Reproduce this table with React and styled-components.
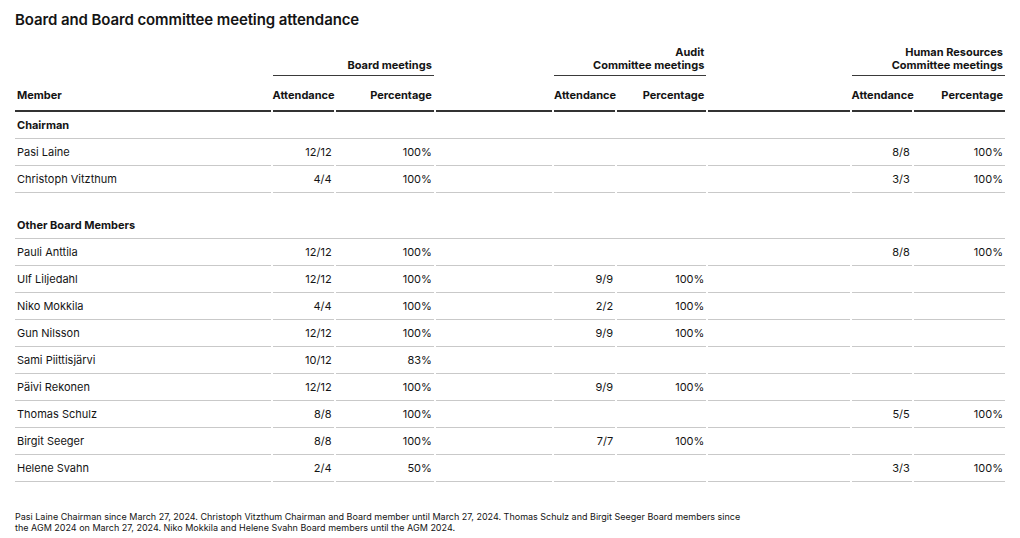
import React from "react";
import styled, { createGlobalStyle } from "styled-components";

const GlobalStyle = createGlobalStyle`
  html, body, #root {
    margin: 0;
    padding: 0;
    background: #ffffff;
  }
  body {
    font-family: Inter, "Liberation Sans", sans-serif;
    color: #141414;
  }
`;

const Page = styled.div`
  width: 1020px;
  padding: 11px 15px 0 15px;
  box-sizing: border-box;
`;

const Title = styled.h1`
  margin: 0;
  font-size: 15px;
  line-height: 18px;
  font-weight: 600;
  letter-spacing: -0.1px;
`;

const Table = styled.table`
  border-collapse: separate;
  border-spacing: 2px 0;
  margin: 17px -2px 0 -2px;
  table-layout: fixed;
  width: calc(100% + 4px);
  font-size: 11px;
`;

const GroupCell = styled.th`
  padding: 0 2px 3px 0;
  vertical-align: bottom;
  text-align: right;
  font-weight: 700;
  line-height: 13px;
  border-bottom: ${(p) => (p.$line ? "1.5px solid #3a3a3a" : "none")};
`;

const HeadCell = styled.th`
  padding: 13px 2px 8px ${(p) => (p.$left ? "2px" : "0")};
  text-align: ${(p) => (p.$left ? "left" : "right")};
  font-weight: 700;
  line-height: 13px;
  border-bottom: 2px solid #333;
  white-space: nowrap;
`;

const SectionCell = styled.td`
  padding: ${(p) => (p.$spaced ? "26px" : "7px")} 2px 6px 2px;
  font-weight: 700;
  line-height: 13px;
  border-bottom: 1px solid #c9c9c9;
`;

const Cell = styled.td`
  height: 26px;
  padding: 0 2px;
  line-height: 13px;
  text-align: ${(p) => (p.$left ? "left" : "right")};
  border-bottom: 1px solid #c9c9c9;
  white-space: nowrap;
`;

const Note = styled.p`
  margin: 29px 0 0 0;
  font-size: 9px;
  line-height: 11px;
  letter-spacing: 0;
  max-width: 728px;
`;

const widths = [255, 61, 98, 116, 61, 89, 141, 60, 91];

const sections = [
  {
    title: "Chairman",
    rows: [
      ["Pasi Laine", "12/12", "100%", "", "", "8/8", "100%"],
      ["Christoph Vitzthum", "4/4", "100%", "", "", "3/3", "100%"],
    ],
  },
  {
    title: "Other Board Members",
    spaced: true,
    rows: [
      ["Pauli Anttila", "12/12", "100%", "", "", "8/8", "100%"],
      ["Ulf Liljedahl", "12/12", "100%", "9/9", "100%", "", ""],
      ["Niko Mokkila", "4/4", "100%", "2/2", "100%", "", ""],
      ["Gun Nilsson", "12/12", "100%", "9/9", "100%", "", ""],
      ["Sami Piittisjärvi", "10/12", "83%", "", "", "", ""],
      ["Päivi Rekonen", "12/12", "100%", "9/9", "100%", "", ""],
      ["Thomas Schulz", "8/8", "100%", "", "", "5/5", "100%"],
      ["Birgit Seeger", "8/8", "100%", "7/7", "100%", "", ""],
      ["Helene Svahn", "2/4", "50%", "", "", "3/3", "100%"],
    ],
  },
];

function Row({ r }) {
  const [name, ba, bp, aa, ap, ha, hp] = r;
  return (
    <tr>
      <Cell $left>{name}</Cell>
      <Cell>{ba}</Cell>
      <Cell>{bp}</Cell>
      <Cell />
      <Cell>{aa}</Cell>
      <Cell>{ap}</Cell>
      <Cell />
      <Cell>{ha}</Cell>
      <Cell>{hp}</Cell>
    </tr>
  );
}

export default function App() {
  return (
    <Page>
      <GlobalStyle />
      <Title>Board and Board committee meeting attendance</Title>
      <Table>
        <colgroup>
          {widths.map((w, i) => (
            <col key={i} style={{ width: w }} />
          ))}
        </colgroup>
        <thead>
          <tr>
            <GroupCell />
            <GroupCell colSpan={2} $line>
              Board meetings
            </GroupCell>
            <GroupCell />
            <GroupCell colSpan={2} $line>
              Audit
              <br />
              Committee meetings
            </GroupCell>
            <GroupCell />
            <GroupCell colSpan={2} $line>
              Human Resources
              <br />
              Committee meetings
            </GroupCell>
          </tr>
          <tr>
            <HeadCell $left>Member</HeadCell>
            <HeadCell>Attendance</HeadCell>
            <HeadCell>Percentage</HeadCell>
            <HeadCell />
            <HeadCell>Attendance</HeadCell>
            <HeadCell>Percentage</HeadCell>
            <HeadCell />
            <HeadCell>Attendance</HeadCell>
            <HeadCell>Percentage</HeadCell>
          </tr>
        </thead>
        <tbody>
          {sections.map((s) => (
            <React.Fragment key={s.title}>
              <tr>
                <SectionCell colSpan={9} $spaced={s.spaced}>
                  {s.title}
                </SectionCell>
              </tr>
              {s.rows.map((r) => (
                <Row key={r[0]} r={r} />
              ))}
            </React.Fragment>
          ))}
        </tbody>
      </Table>
      <Note>
        Pasi Laine Chairman since March 27, 2024. Christoph Vitzthum Chairman and Board member until
        March 27, 2024. Thomas Schulz and Birgit Seeger Board members since the AGM 2024 on March 27,
        2024. Niko Mokkila and Helene Svahn Board members until the AGM 2024.
      </Note>
    </Page>
  );
}
